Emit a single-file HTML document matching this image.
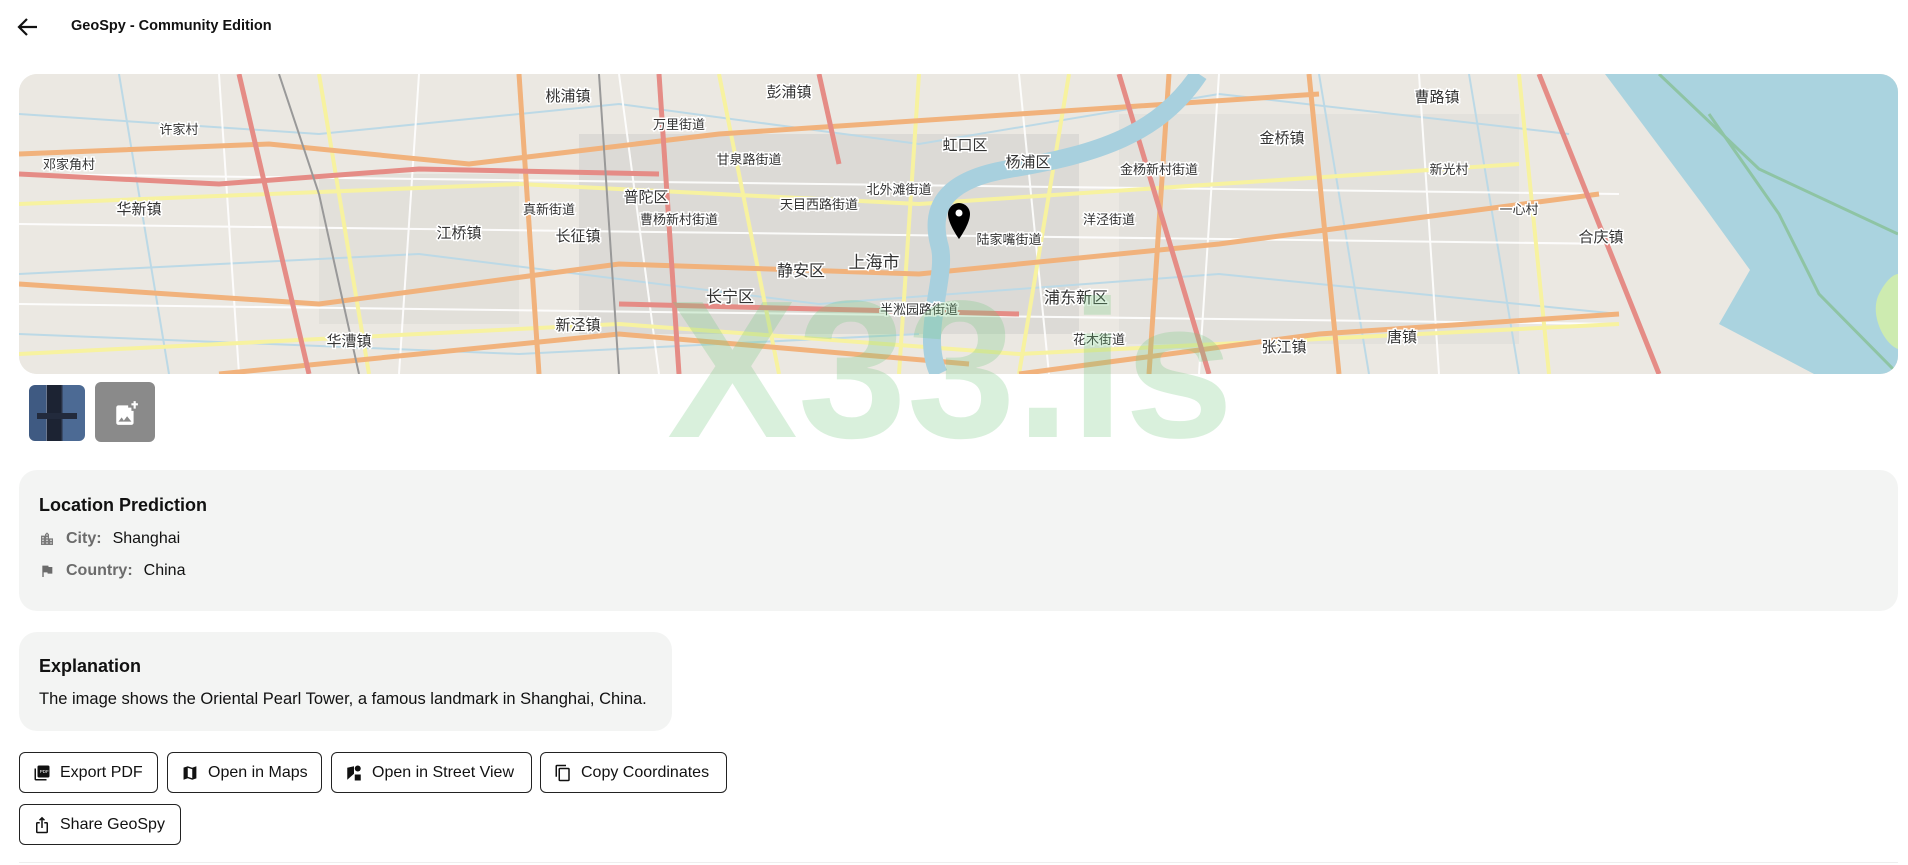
<!DOCTYPE html>
<html><head><meta charset="utf-8"><style>
*{box-sizing:border-box;margin:0;padding:0}
body{width:1908px;height:865px;background:#fff;font-family:"Liberation Sans",Arial,sans-serif;color:#111;position:relative;overflow:hidden}
.hdr{position:absolute;left:17px;top:15px;height:24px}
.title{position:absolute;left:71px;top:18px;font-weight:bold;font-size:14.5px}
.map{position:absolute;left:19px;top:74px;width:1879px;height:300px;border-radius:18px;overflow:hidden;background:#e9e6e0}
.thumb{position:absolute;left:29px;top:385px;width:56px;height:56px;border-radius:6px;background:linear-gradient(90deg,#3f5a82 0 30%,#6b7890 30% 45%,#2a3346 45% 60%,#4c6a94 60%);overflow:hidden}
.add{position:absolute;left:95px;top:382px;width:60px;height:60px;border-radius:6px;background:#8a8a8a}
.card{position:absolute;background:#f3f4f3;border-radius:18px}
.card h3{position:absolute;left:20px;font-size:18px;font-weight:bold}
.row{position:absolute;left:20px;font-size:16px;display:flex;align-items:center}
.row .lbl{color:#6b6b6b;font-weight:bold;margin-left:11px;margin-right:11px}
.btn{position:absolute;height:41px;border:1px solid #222;border-radius:6px;font-size:16px;display:flex;align-items:center;padding-left:13px}
.btn svg{margin-right:9px}
.wm{position:absolute;left:667px;top:272px;font-size:196px;font-weight:bold;color:rgba(120,200,130,0.28);letter-spacing:0px;line-height:1;pointer-events:none}
</style></head><body>
<svg class="hdr" width="22" height="24" viewBox="0 0 22 24"><path d="M20 12H3M10 4L2 12L10 20" stroke="#111" stroke-width="2.2" fill="none"/></svg>
<div class="title">GeoSpy - Community Edition</div>

<div class="map">
<svg width="1879" height="300" viewBox="0 0 1879 300" style="font-family:'Noto Sans CJK SC',sans-serif">
<rect width="1879" height="300" fill="#ebe8e2"/>
<g fill="#dcdad6"><rect x="560" y="60" width="500" height="200"/><rect x="300" y="100" width="200" height="150" opacity=".6"/><rect x="1100" y="40" width="400" height="230" opacity=".5"/></g>
<g stroke="#bcd9e6" stroke-width="2" fill="none">
<path d="M0 40 L300 60 L600 30 L900 70 L1200 20 L1550 60"/><path d="M0 200 L400 180 L800 230 L1200 200 L1600 240"/><path d="M0 260 L500 280 L900 260"/><path d="M100 0 L150 300"/><path d="M1300 0 L1350 300"/><path d="M1450 0 L1500 300"/></g>
<g stroke="#fff" stroke-width="2" fill="none" opacity=".9">
<path d="M0 100 L1600 120"/><path d="M0 150 L1600 170"/><path d="M0 230 L1600 250"/><path d="M200 0 L220 300"/><path d="M400 0 L380 300"/><path d="M600 0 L640 300"/><path d="M1000 0 L1030 300"/><path d="M1200 0 L1180 300"/><path d="M1400 0 L1420 300"/></g>
<g stroke="#f7f2a0" stroke-width="4" fill="none">
<path d="M0 130 L500 110 L900 130 L1500 90"/><path d="M0 280 L600 250 L1000 280 L1600 250"/><path d="M700 0 L760 300"/><path d="M1050 0 L1000 300"/><path d="M1500 0 L1530 300"/><path d="M300 0 L350 300"/><path d="M900 0 L880 300"/></g>
<g stroke="#f1b27c" stroke-width="5" fill="none">
<path d="M0 80 L250 70 L450 90 L700 60 L1000 40 L1300 20"/><path d="M0 210 L300 230 L600 190 L900 200 L1200 170 L1580 120"/><path d="M500 0 L520 300"/><path d="M1150 0 L1130 300"/><path d="M1290 0 L1320 300"/><path d="M200 300 L600 260 L950 290"/><path d="M1000 300 L1300 260 L1600 240"/></g>
<g stroke="#e58c86" stroke-width="5" fill="none">
<path d="M0 100 L200 110 L400 95 L640 100"/><path d="M220 0 L290 300"/><path d="M1520 0 L1640 300"/><path d="M640 0 L660 300"/><path d="M1100 0 L1190 300"/><path d="M800 0 L820 90"/><path d="M600 230 L1000 240"/></g>
<path d="M1180 0 C1140 60 1080 80 990 95 C930 105 910 130 920 170 C930 200 900 260 920 300" stroke="#a8d0de" stroke-width="18" fill="none"/>
<path d="M260 0 L300 120 L340 300 M580 0 L600 300" stroke="#999" stroke-width="2" fill="none"/>
<path d="M1586 0 L1684 131 L1731 196 L1700 250 L1795 300 L1879 300 L1879 0 Z" fill="#aad3df"/>
<path d="M1860 220 C1870 200 1879 200 1879 200 L1879 275 C1865 270 1850 240 1860 220Z" fill="#cdebb0"/>
<path d="M1640 0 L1740 95 L1879 160" stroke="#8ec4a4" stroke-width="3" fill="none"/>
<path d="M1690 40 L1760 140 L1800 220 L1879 300" stroke="#8ec4a4" stroke-width="3" fill="none"/>
<g font-size="13" fill="#333" text-anchor="middle" stroke="#fff" stroke-width="3" paint-order="stroke">
<text x="855" y="194" font-size="17">上海市</text><text x="1057" y="229" font-size="16">浦东新区</text>
<text x="782" y="202" font-size="16">静安区</text><text x="711" y="228" font-size="16">长宁区</text>
<text x="627" y="128" font-size="15">普陀区</text><text x="946" y="76" font-size="15">虹口区</text>
<text x="1009" y="93" font-size="15">杨浦区</text><text x="120" y="140" font-size="15">华新镇</text>
<text x="440" y="164" font-size="15">江桥镇</text><text x="559" y="167" font-size="15">长征镇</text>
<text x="559" y="256" font-size="15">新泾镇</text><text x="330" y="272" font-size="15">华漕镇</text>
<text x="1263" y="69" font-size="15">金桥镇</text><text x="1418" y="28" font-size="15">曹路镇</text>
<text x="1582" y="168" font-size="15">合庆镇</text><text x="1265" y="278" font-size="15">张江镇</text>
<text x="1383" y="268" font-size="15">唐镇</text><text x="549" y="27" font-size="15">桃浦镇</text>
<text x="770" y="23" font-size="15">彭浦镇</text>
<text x="660" y="55">万里街道</text><text x="730" y="90">甘泉路街道</text><text x="800" y="135">天目西路街道</text>
<text x="880" y="120">北外滩街道</text><text x="1090" y="150">洋泾街道</text><text x="990" y="170">陆家嘴街道</text>
<text x="660" y="150">曹杨新村街道</text><text x="530" y="140">真新街道</text><text x="900" y="240">半淞园路街道</text>
<text x="1140" y="100">金杨新村街道</text><text x="1430" y="100">新光村</text><text x="1500" y="140">一心村</text>
<text x="50" y="95">邓家角村</text><text x="160" y="60">许家村</text><text x="1080" y="270">花木街道</text>
</g>
<path d="M940 165 C940 165 929 150 929 140 A11 11 0 0 1 951 140 C951 150 940 165 940 165Z" fill="#000"/>
<circle cx="940" cy="139" r="3.5" fill="#fff"/>
</svg>
</div>

<div class="thumb"><div style="position:absolute;left:18px;top:0;width:14px;height:56px;background:#1c2333"></div><div style="position:absolute;left:8px;top:28px;width:40px;height:6px;background:#222a3c"></div></div>
<div class="add"><svg style="position:absolute;left:18px;top:18px" width="26" height="26" viewBox="0 0 24 24"><path d="M19 7V4h-2V2h2V0h2v2h2v2h-2v3zM17 9V6h-3V4H5a2 2 0 0 0-2 2v14a2 2 0 0 0 2 2h12a2 2 0 0 0 2-2V9zM5 19l3-4 2 3 3-4 4 5z" fill="#fff" transform="translate(0,1)"/></svg></div>

<div class="wm">X33.is</div>

<div class="card" style="left:19px;top:470px;width:1879px;height:141px">
<h3 style="top:25px">Location Prediction</h3>
<div class="row" style="top:60px"><svg width="16" height="16" viewBox="0 0 24 24"><path d="M15 11V5l-3-3-3 3v2H3v14h18V11zm-8 8H5v-2h2zm0-4H5v-2h2zm0-4H5V9h2zm6 8h-2v-2h2zm0-4h-2v-2h2zm0-4h-2V9h2zm0-4h-2V5h2zm6 12h-2v-2h2zm0-4h-2v-2h2z" fill="#7a7a7a"/></svg><span class="lbl">City:</span><span>Shanghai</span></div>
<div class="row" style="top:92px"><svg width="16" height="16" viewBox="0 0 24 24"><path d="M14.4 6L14 4H5v17h2v-7h5.6l.4 2h7V6z" fill="#6b6b6b"/></svg><span class="lbl">Country:</span><span>China</span></div>
</div>

<div class="card" style="left:19px;top:632px;width:653px;height:99px">
<h3 style="top:24px">Explanation</h3>
<div class="row" style="top:58px;font-size:16.5px">The image shows the Oriental Pearl Tower, a famous landmark in Shanghai, China.</div>
</div>

<div class="btn" style="left:19px;top:752px;width:139px"><svg width="18" height="18" viewBox="0 0 24 24"><path d="M20 2H8a2 2 0 0 0-2 2v12a2 2 0 0 0 2 2h12a2 2 0 0 0 2-2V4a2 2 0 0 0-2-2zM4 6H2v14a2 2 0 0 0 2 2h14v-2H4z" fill="#111"/><text x="9" y="12" font-size="6" fill="#fff" font-family="Liberation Sans">PDF</text></svg>Export PDF</div>
<div class="btn" style="left:167px;top:752px;width:155px"><svg width="18" height="18" viewBox="0 0 24 24"><path d="M20.5 3l-5.5 2-6-2-5.6 1.9V21l5.6-2 6 2 5.5-1.9zM15 19l-6-2V5l6 2z" fill="#111"/></svg>Open in Maps</div>
<div class="btn" style="left:331px;top:752px;width:201px"><svg width="18" height="18" viewBox="0 0 24 24"><circle cx="17" cy="6" r="4" fill="#111"/><path d="M3 5l9-2v10l-9 8zM13 14h8v8h-8z" fill="#111"/></svg>Open in Street View</div>
<div class="btn" style="left:540px;top:752px;width:187px"><svg width="18" height="18" viewBox="0 0 24 24"><path d="M16 1H4a2 2 0 0 0-2 2v14h2V3h12zm3 4H8a2 2 0 0 0-2 2v14a2 2 0 0 0 2 2h11a2 2 0 0 0 2-2V7a2 2 0 0 0-2-2zm0 16H8V7h11z" fill="#111"/></svg>Copy Coordinates</div>
<div class="btn" style="left:19px;top:804px;width:162px"><svg width="18" height="18" viewBox="0 0 24 24"><path d="M16 5l-1.4 1.4L13 4.8V16h-2V4.8L9.4 6.4 8 5l4-4zM20 10v11a2 2 0 0 1-2 2H6a2 2 0 0 1-2-2V10a2 2 0 0 1 2-2h3v2H6v11h12V10h-3V8h3a2 2 0 0 1 2 2z" fill="#111"/></svg>Share GeoSpy</div>
<div style="position:absolute;left:19px;top:862px;width:1879px;height:1px;background:#eee"></div>
</body></html>
